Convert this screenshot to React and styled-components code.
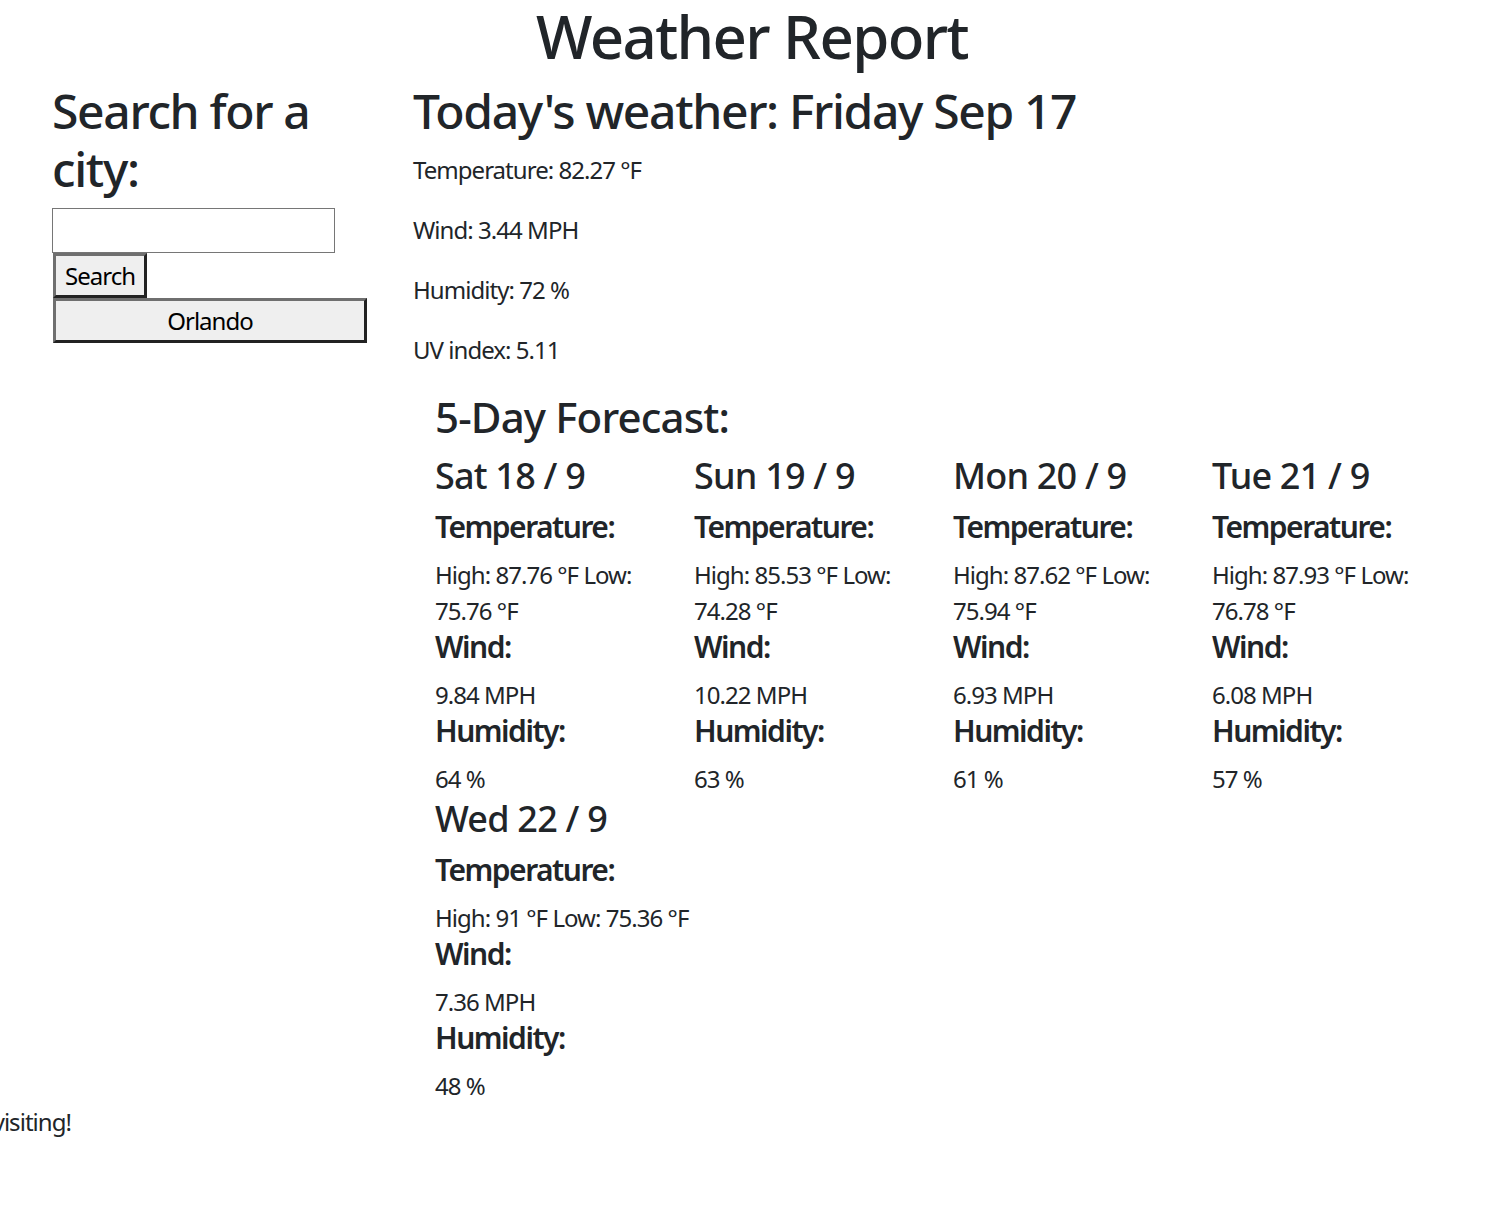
import React from 'react';
import styled, { createGlobalStyle } from 'styled-components';

const GlobalStyle = createGlobalStyle`
  body {
    margin: 0;
    font-family: "Noto Sans", "Liberation Sans", sans-serif;
    color: #212529;
    background: #fff;
  }
`;

const Title = styled.h1`
  margin: 0 0 10px;
  font-size: 60px;
  line-height: 72px;
  font-weight: 500;
  letter-spacing: -0.027em;
  text-align: center;
`;

const Main = styled.div`
  display: flex;
  align-items: flex-start;
`;

const Sidebar = styled.aside`
  width: 314px;
  margin-left: 52px;
  margin-right: 47px;
`;

const Heading = styled.h2`
  margin: 0 0 ${(p) => (p.$tight ? '11px' : '12px')};
  font-size: 48px;
  line-height: 57.6px;
  font-weight: 500;
  letter-spacing: -0.028em;
`;

const SearchInput = styled.input`
  display: block;
  box-sizing: border-box;
  width: 283px;
  height: 45px;
  margin: 0;
  border: 1px solid #767676;
  font: inherit;
  font-size: 24px;
`;

const OutsetButton = styled.button`
  display: block;
  box-sizing: border-box;
  width: ${(p) => (p.$wide ? '314px' : 'auto')};
  height: 45px;
  margin: 0 0 0 1px;
  padding: 0 9px;
  background: #efefef;
  color: #000;
  font-family: inherit;
  font-size: 24px;
  letter-spacing: -0.04em;
  border: 3px solid;
  border-color: #6f6f6f #222 #222 #6f6f6f;
  cursor: pointer;
`;

const Today = styled.section`
  flex: 1;
`;

const Stat = styled.p`
  margin: 0 0 24px;
  font-size: 24px;
  line-height: 36px;
  letter-spacing: -0.04em;
`;

const Forecast = styled.section`
  padding-left: 22px;
`;

const ForecastTitle = styled.h3`
  margin: 0 0 12px;
  font-size: 42px;
  line-height: 50.4px;
  font-weight: 500;
  letter-spacing: -0.02em;
`;

const Days = styled.div`
  display: grid;
  grid-template-columns: repeat(4, 259px);
`;

const DayTitle = styled.h4`
  margin: 0 0 12px;
  font-size: 36px;
  line-height: 43.2px;
  font-weight: 500;
  letter-spacing: -0.022em;
`;

const Label = styled.h5`
  margin: 0 0 12px;
  font-size: 30px;
  line-height: 36px;
  font-weight: 600;
  letter-spacing: -0.05em;
`;

const Value = styled.p`
  margin: 0;
  font-size: 24px;
  line-height: 36px;
  letter-spacing: -0.04em;
`;

const Footer = styled.footer`
  display: flex;
  justify-content: flex-end;
  width: 71px;
  overflow: hidden;
  white-space: nowrap;
  font-size: 24px;
  line-height: 36px;
  letter-spacing: -0.04em;
`;

const days = [
  { date: 'Sat 18 / 9', high: '87.76', low: '75.76', wind: '9.84', hum: 64 },
  { date: 'Sun 19 / 9', high: '85.53', low: '74.28', wind: '10.22', hum: 63 },
  { date: 'Mon 20 / 9', high: '87.62', low: '75.94', wind: '6.93', hum: 61 },
  { date: 'Tue 21 / 9', high: '87.93', low: '76.78', wind: '6.08', hum: 57 },
  { date: 'Wed 22 / 9', high: '91', low: '75.36', wind: '7.36', hum: 48 },
];

// keep a value and its unit on one line
const deg = (v) => `${v}\u00a0°F`;

const App = () => (
  <>
    <GlobalStyle />
    <Title>Weather Report</Title>
    <Main>
      <Sidebar>
        <Heading $tight>Search for a city:</Heading>
        <SearchInput type="text" />
        <OutsetButton type="button">Search</OutsetButton>
        <OutsetButton type="button" $wide>Orlando</OutsetButton>
      </Sidebar>
      <Today>
        <Heading>Today&#39;s weather: Friday Sep 17</Heading>
        <Stat>Temperature: 82.27 °F</Stat>
        <Stat>Wind: 3.44 MPH</Stat>
        <Stat>Humidity: 72 %</Stat>
        <Stat>UV index: 5.11</Stat>
        <Forecast>
          <ForecastTitle>5-Day Forecast:</ForecastTitle>
          <Days>
            {days.map((d) => (
              <div key={d.date}>
                <DayTitle>{d.date}</DayTitle>
                <Label>Temperature:</Label>
                <Value>High: {deg(d.high)} Low: {deg(d.low)}</Value>
                <Label>Wind:</Label>
                <Value>{d.wind} MPH</Value>
                <Label>Humidity:</Label>
                <Value>{d.hum} %</Value>
              </div>
            ))}
          </Days>
        </Forecast>
      </Today>
    </Main>
    <Footer>
      <span>Thanks for visiting!</span>
    </Footer>
  </>
);

export default App;
